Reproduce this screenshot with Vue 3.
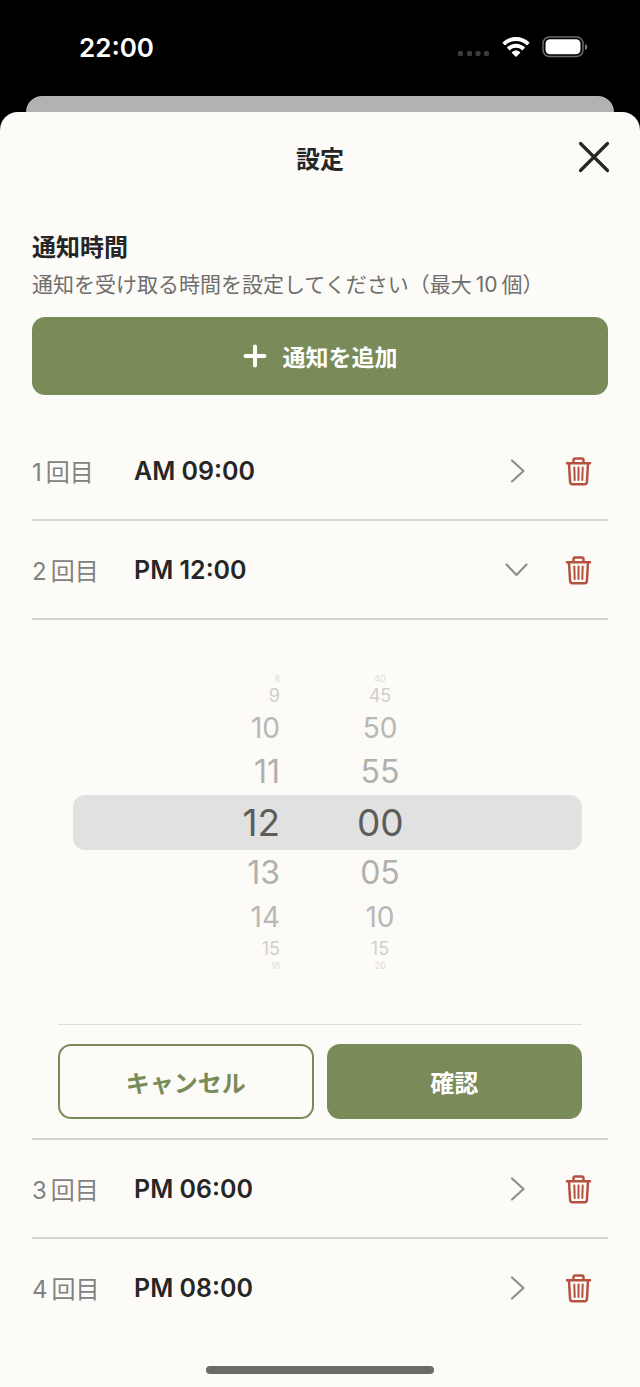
<script setup>
import { ref, computed } from 'vue'

const MAX_ALARMS = 10

const alarms = ref([
  { id: 1, hour: 9, minute: 0 },
  { id: 2, hour: 12, minute: 0 },
  { id: 3, hour: 18, minute: 0 },
  { id: 4, hour: 20, minute: 0 }
])
const openId = ref(2)
const draft = ref({ hour: 12, minute: 0 })

const pad = (n) => String(n).padStart(2, '0')

const fmt = ({ hour, minute }) => {
  const h = hour > 12 ? hour - 12 : hour
  return `${hour < 12 ? 'AM' : 'PM'} ${pad(h)}:${pad(minute)}`
}

// wheel shows four values on each side of the selected one
const offsets = [-4, -3, -2, -1, 0, 1, 2, 3, 4]
const hours = computed(() => offsets.map((o) => ({
  value: (draft.value.hour + o + 24) % 24, dist: Math.abs(o)
})))
const minutes = computed(() => offsets.map((o) => ({
  value: (draft.value.minute + o * 5 + 60) % 60, dist: Math.abs(o)
})))

const toggle = (alarm) => {
  openId.value = openId.value === alarm.id ? null : alarm.id
  draft.value = { hour: alarm.hour, minute: alarm.minute }
}

const confirm = (alarm) => {
  Object.assign(alarm, draft.value)
  openId.value = null
}

const addAlarm = () => {
  if (alarms.value.length >= MAX_ALARMS) return
  const id = Math.max(0, ...alarms.value.map((a) => a.id)) + 1
  alarms.value.push({ id, hour: 9, minute: 0 })
}

const removeAlarm = (id) => {
  alarms.value = alarms.value.filter((a) => a.id !== id)
}
</script>

<template>
  <div class="screen" lang="ja">
    <div class="status-bar">
      <span class="clock">22:00</span>
      <div class="status-icons">
        <svg width="33" height="22" viewBox="0 0 33 22" fill="#3c3c3c">
          <rect x="1" y="15" width="5" height="5" rx="1.500" />
          <rect x="10" y="15" width="5" height="5" rx="1.500" />
          <rect x="18.500" y="15" width="5" height="5" rx="1.500" />
          <rect x="27" y="15" width="5" height="5" rx="1.500" />
        </svg>
        <svg width="28" height="22" viewBox="0 0 28 22" fill="#fff">
          <path d="M14 1C8.800 1 4.100 3 .8 6.200c-.3.3-.3.7 0 1l1.800 1.800c.3.3.7.3 1 0C6.300 6.400 10 4.900 14 4.900s7.700 1.500 10.400 4.100c.3.3.7.3 1 0l1.800-1.800c.3-.3.3-.7 0-1C23.900 3 19.200 1 14 1z" />
          <path d="M14 7.700c-3.300 0-6.400 1.300-8.700 3.400-.3.3-.3.7 0 1l1.900 1.900c.3.3.7.3 1 0 1.500-1.400 3.600-2.300 5.800-2.300s4.300.9 5.800 2.300c.3.3.7.3 1 0l1.900-1.900c.3-.3.3-.7 0-1-2.300-2.100-5.400-3.400-8.700-3.400z" />
          <path d="M14 14.400c-1.500 0-2.900.6-4 1.500-.3.3-.3.7 0 1l3.500 3.600c.3.3.7.3 1 0l3.500-3.600c.3-.3.3-.7 0-1-1.100-.9-2.500-1.500-4-1.500z" />
        </svg>
        <svg width="46" height="22" viewBox="0 0 46 22">
          <rect x="1" y="1" width="40" height="19.500" rx="6.500" fill="none" stroke="#6b6b6b" stroke-width="1.500" />
          <rect x="3.500" y="3.300" width="35" height="15" rx="4.500" fill="#fff" />
          <path d="M43 8c1.500.5 2.300 1.600 2.300 3s-.8 2.500-2.300 3z" fill="#7b7b7b" />
        </svg>
      </div>
    </div>

    <div class="sheet-behind"></div>

    <main class="sheet">
      <header class="sheet-header">
        <h1>設定</h1>
        <button class="icon-btn close-btn" type="button" aria-label="閉じる">
          <svg width="32" height="32" viewBox="0 0 32 32" fill="none" stroke="#262626" stroke-width="3.200" stroke-linecap="round"><path d="M2.500 2.500l27 27M29.500 2.500l-27 27" /></svg>
        </button>
      </header>

      <section class="intro">
        <h2>通知時間</h2>
        <p>通知を受け取る時間を設定してください（最大<span class="num">10</span>個）</p>
        <button class="btn add-btn" type="button" @click="addAlarm">
          <svg width="24" height="24" viewBox="0 0 24 24" fill="none" stroke="#fff" stroke-width="4" stroke-linecap="round"><path d="M12 2.500v19M2.500 12h19" /></svg>
          <span>通知を追加</span>
        </button>
      </section>

      <ul class="alarm-list">
        <li v-for="(alarm, i) in alarms" :key="alarm.id" class="alarm">
          <div class="alarm-row">
            <button class="alarm-toggle" type="button" :aria-expanded="openId === alarm.id" @click="toggle(alarm)">
              <span class="alarm-label"><span>{{ i + 1 }}</span><span>回目</span></span>
              <span class="alarm-time">{{ fmt(alarm) }}</span>
              <svg width="28" height="28" viewBox="0 0 28 28" fill="none" stroke="#8e8e8b" stroke-width="2.200" stroke-linecap="round" stroke-linejoin="round">
                <path v-if="openId === alarm.id" d="M3.500 8.500L13.500 19l10-10.500" />
                <path v-else d="M9 3.500L20.500 14 9 24.500" />
              </svg>
            </button>
            <button class="icon-btn" type="button" :aria-label="`${i + 1}回目を削除`" @click="removeAlarm(alarm.id)">
              <svg width="30" height="30" viewBox="0 0 30 30" fill="none" stroke="#b5513f" stroke-linecap="round" stroke-linejoin="round">
                <path stroke-width="2.500" d="M3 7.300h23M9.500 7V4.200c0-1.100.7-1.700 1.700-1.700h6.600c1 0 1.700.6 1.700 1.700V7M5 8l1.100 18c.1 1.400.9 2.200 2.200 2.200h12.400c1.300 0 2.100-.8 2.200-2.200L24 8" />
                <path stroke-width="2" d="M10.300 11.500l.4 12.500M14.500 11.500V24M18.700 11.500L18.300 24" />
              </svg>
            </button>
          </div>

          <div v-if="openId === alarm.id" class="picker">
            <div class="wheels">
              <div class="wheel-band"></div>
              <ul class="wheel wheel-hour" role="listbox" aria-label="時">
                <li v-for="h in hours" :key="h.value" role="option" :class="`dist-${h.dist}`" :aria-selected="h.dist === 0" @click="draft.hour = h.value">{{ h.value }}</li>
              </ul>
              <ul class="wheel wheel-minute" role="listbox" aria-label="分">
                <li v-for="m in minutes" :key="m.value" role="option" :class="`dist-${m.dist}`" :aria-selected="m.dist === 0" @click="draft.minute = m.value">{{ pad(m.value) }}</li>
              </ul>
            </div>
            <div class="picker-actions">
              <button class="btn btn-outline" type="button" @click="openId = null">キャンセル</button>
              <button class="btn" type="button" @click="confirm(alarm)">確認</button>
            </div>
          </div>
        </li>
      </ul>

      <div class="home-indicator"></div>
    </main>
  </div>
</template>

<style>
body {
  margin: 0;
  background: #000;
}
</style>

<style scoped>
.screen {
  min-height: 100vh;
  display: flex;
  flex-direction: column;
  background: #000;
  color: #262626;
  font-family: Inter, "Noto Sans CJK JP", sans-serif;
}

button {
  font-family: inherit;
  color: inherit;
  cursor: pointer;
}

svg { display: block; }

/* Status bar */
.status-bar {
  height: 96px;
  box-sizing: border-box;
  padding: 0 52px 2px 79px;
  display: flex;
  align-items: center;
  justify-content: space-between;
  color: #fff;
}
.clock {
  font-size: 26px;
  font-weight: 600;
}
.status-icons {
  display: flex;
  align-items: center;
  gap: 12px;
}

/* Sheet */
.sheet-behind {
  height: 16px;
  margin: 0 26px;
  border-radius: 16px 16px 0 0;
  background: #b2b2b0;
}
.sheet {
  flex: 1;
  display: flex;
  flex-direction: column;
  padding: 0 32px;
  border-radius: 18px 18px 0 0;
  background: #fcfbf8;
}
.sheet-header {
  display: grid;
  grid-template-columns: 1fr auto 1fr;
  align-items: center;
  height: 90px;
}
.sheet-header h1 {
  grid-column: 2;
  margin: 0;
  font-size: 24px;
  font-weight: 600;
}
.icon-btn {
  padding: 0;
  border: none;
  background: none;
}
.close-btn {
  justify-self: end;
  margin-right: -2px;
}

.intro {
  padding-top: 28px;
}
.intro h2 {
  margin: 0;
  font-size: 24px;
  line-height: 36px;
  font-weight: 600;
}
.intro p {
  margin: 3px 0 16px;
  font-size: 21px;
  line-height: 32px;
  color: #6e6e6c;
}
.intro .num {
  margin: 0 4px;
}

.btn {
  display: flex;
  align-items: center;
  justify-content: center;
  height: 75px;
  padding: 0;
  border: none;
  border-radius: 13px;
  background: #798b59;
  color: #fff;
  font-size: 24px;
  font-weight: 600;
}
.btn-outline {
  border: 2px solid #798b59;
  background: transparent;
  color: #798b59;
}
.add-btn {
  width: 100%;
  height: 78px;
  gap: 16px;
  font-size: 23px;
}

/* Alarm list */
.alarm-list {
  list-style: none;
  margin: 0;
  padding: 27px 0 0;
}
.alarm-row {
  display: flex;
  align-items: center;
  gap: 33px;
  height: 99px;
  box-sizing: border-box;
  padding-right: 14px;
  border-bottom: 2px solid #d5d4d1;
}
.alarm:last-child .alarm-row {
  border-bottom-color: transparent;
}
.alarm-toggle {
  flex: 1;
  display: flex;
  align-items: center;
  height: 100%;
  padding: 0;
  border: none;
  background: none;
  text-align: left;
}
.alarm-label {
  display: flex;
  align-items: baseline;
  gap: 4px;
  width: 102px;
  font-size: 24px;
  color: #81817f;
}
.alarm-time {
  flex: 1;
  font-size: 25px;
  font-weight: 600;
}

/* Time picker */
.picker {
  padding: 53px 26px 0;
  border-bottom: 2px solid #d5d4d1;
}
.wheels {
  display: grid;
  grid-template-columns: 1fr 1fr;
  column-gap: 74px;
  padding-bottom: 52px;
  border-bottom: 1px solid #dededd;
}
.wheel-band {
  grid-row: 1;
  grid-column: 1 / 3;
  align-self: center;
  height: 55px;
  margin-left: 15px;
  border-radius: 12px;
  background: #e1e1e1;
}
.wheel {
  grid-row: 1;
  list-style: none;
  margin: 0;
  padding: 0;
}
.wheel-hour {
  grid-column: 1;
  padding-right: 3px;
  text-align: right;
}
.wheel-minute {
  grid-column: 2;
  width: 46px;
  text-align: center;
}
.dist-0 {
  font-size: 37px;
  line-height: 55px;
  color: #5c5c5a;
}
.dist-1 {
  font-size: 32px;
  line-height: 46px;
  color: #b0b0ad;
}
.dist-2 {
  font-size: 28px;
  line-height: 42px;
  color: #b8b8b5;
}
.dist-3 {
  font-size: 18px;
  line-height: 22px;
  color: #cfcfcc;
}
.dist-4 {
  font-size: 9px;
  line-height: 12px;
  color: #dcdcd9;
}
.picker-actions {
  display: grid;
  grid-template-columns: 1fr 1fr;
  gap: 13px;
  padding: 19px 0;
}

.home-indicator {
  width: 228px;
  height: 8px;
  margin: auto auto 13px;
  border-radius: 4px;
  background: #6b6b69;
}
</style>
